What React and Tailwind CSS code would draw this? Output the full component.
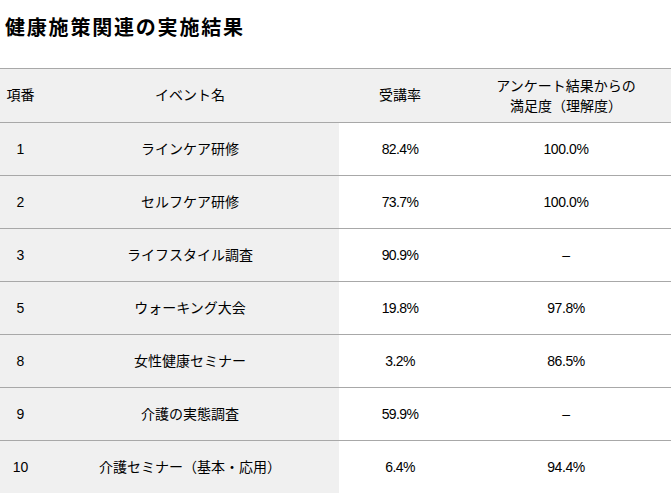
import React from "react";

const rows = [
  ["1", "ラインケア研修", "82.4%", "100.0%"],
  ["2", "セルフケア研修", "73.7%", "100.0%"],
  ["3", "ライフスタイル調査", "90.9%", "–"],
  ["5", "ウォーキング大会", "19.8%", "97.8%"],
  ["8", "女性健康セミナー", "3.2%", "86.5%"],
  ["9", "介護の実態調査", "59.9%", "–"],
  ["10", "介護セミナー（基本・応用）", "6.4%", "94.4%"],
];

export default function App() {
  return (
    <div
      className="w-[671px] h-[493px] bg-white text-black overflow-hidden"
      style={{ fontFamily: '"Liberation Sans", "Noto Sans CJK JP", sans-serif' }}
    >
      <div className="h-[68px] pt-[16px] pl-[5px]">
        <h1 className="text-[20px] leading-[24px] font-bold tracking-[0.09em] text-black">
          健康施策関連の実施結果
        </h1>
      </div>
      <div className="border-t border-[#a8a8a8] text-[14px]">
        <div className="flex h-[54px] bg-[#f0f0f0] border-b border-[#a8a8a8] items-center">
          <div className="w-[41px] text-center">項番</div>
          <div className="w-[298px] text-center">イベント名</div>
          <div className="w-[122px] text-center">受講率</div>
          <div className="flex-1 text-center leading-[20px]">
            アンケート結果からの
            <br />
            満足度（理解度）
          </div>
        </div>
        {rows.map((r) => (
          <div key={r[0]} className="flex h-[53px] border-b border-[#a8a8a8]">
            <div className="w-[41px] bg-[#f0f0f0] flex items-center justify-center">{r[0]}</div>
            <div className="w-[298px] bg-[#f0f0f0] flex items-center justify-center">{r[1]}</div>
            <div className="w-[122px] flex items-center justify-center tracking-[-0.6px]">{r[2]}</div>
            <div className="flex-1 flex items-center justify-center tracking-[-0.4px]">{r[3]}</div>
          </div>
        ))}
      </div>
    </div>
  );
}
